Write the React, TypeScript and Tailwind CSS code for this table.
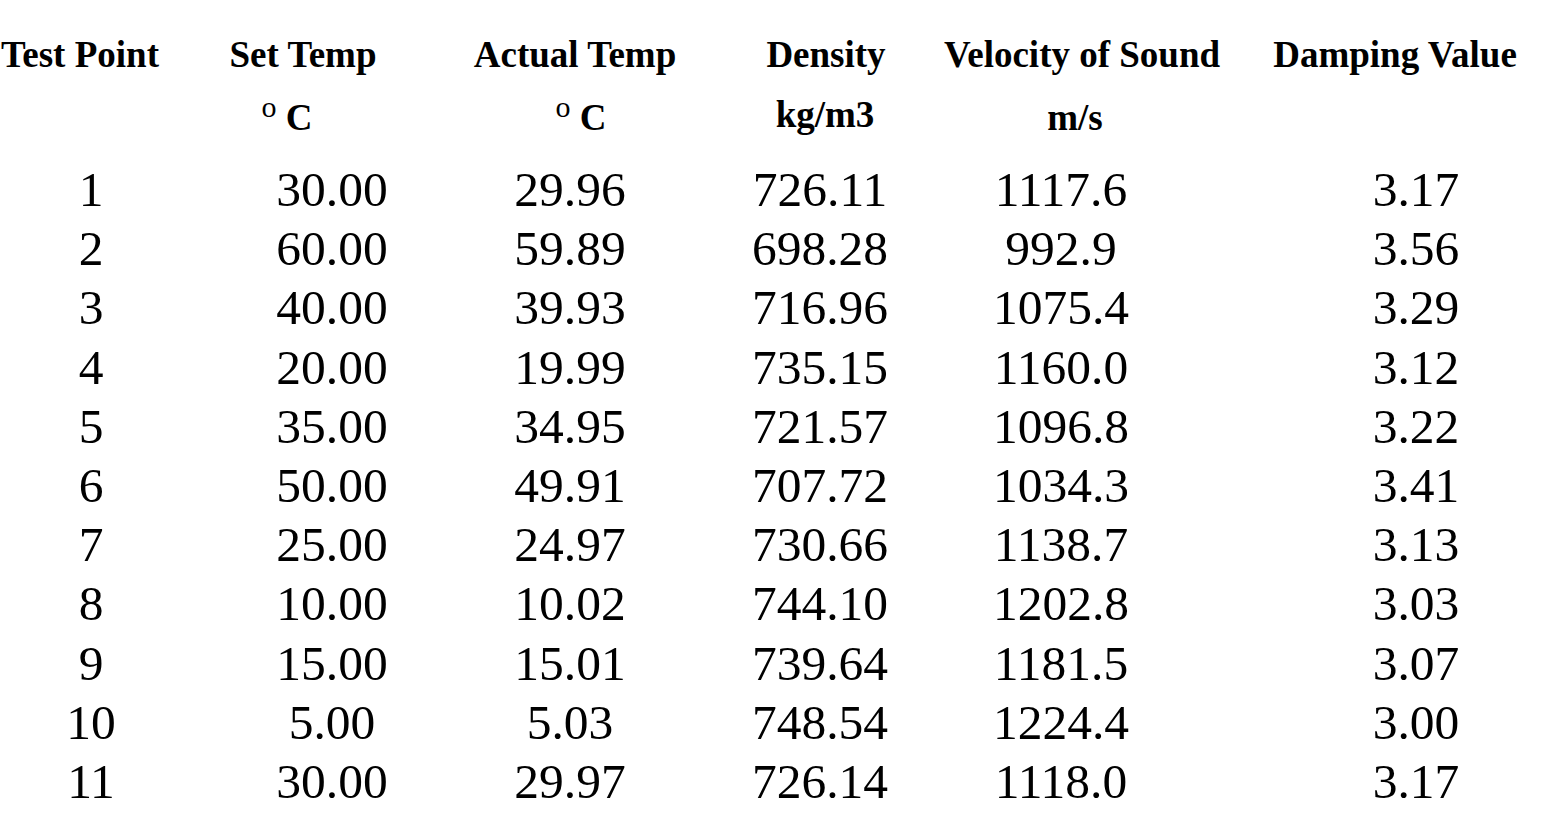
const rows = [
  ["1", "30.00", "29.96", "726.11", "1117.6", "3.17"],
  ["2", "60.00", "59.89", "698.28", "992.9", "3.56"],
  ["3", "40.00", "39.93", "716.96", "1075.4", "3.29"],
  ["4", "20.00", "19.99", "735.15", "1160.0", "3.12"],
  ["5", "35.00", "34.95", "721.57", "1096.8", "3.22"],
  ["6", "50.00", "49.91", "707.72", "1034.3", "3.41"],
  ["7", "25.00", "24.97", "730.66", "1138.7", "3.13"],
  ["8", "10.00", "10.02", "744.10", "1202.8", "3.03"],
  ["9", "15.00", "15.01", "739.64", "1181.5", "3.07"],
  ["10", "5.00", "5.03", "748.54", "1224.4", "3.00"],
  ["11", "30.00", "29.97", "726.14", "1118.0", "3.17"],
];

const cell = "shrink-0 flex justify-center whitespace-nowrap";

// degree mark drawn as a raised "o" like the source document
const Degree = () => (
  <span>
    <span className="relative -top-[13px] text-[30px] font-normal leading-none">o</span> C
  </span>
);

export default function App() {
  return (
    <div className="w-[1542px] h-[827px] overflow-hidden bg-white text-black font-['Liberation_Serif','Times_New_Roman',serif]">
      {/* header labels */}
      <div className="flex pt-[33px] text-[37px] font-bold leading-[44px]">
        <div className={`w-[160px] ${cell}`}>Test Point</div>
        <div className={`w-[286px] ${cell}`}>Set Temp</div>
        <div className={`w-[258px] ${cell}`}>Actual Temp</div>
        <div className={`w-[244px] ${cell}`}>Density</div>
        <div className={`w-[268px] ${cell}`}>Velocity of Sound</div>
        <div className={`ml-[34px] w-[290px] ${cell}`}>Damping Value</div>
      </div>

      {/* units */}
      <div className="flex h-[44px] mt-[19px] text-[37px] font-bold leading-[44px]">
        <div className={`w-[160px] ${cell}`}></div>
        <div className={`w-[254px] ${cell}`}>
          <Degree />
        </div>
        <div className={`w-[334px] ${cell}`}>
          <Degree />
        </div>
        <div className={`w-[154px] ${cell} -mt-[3px]`}>kg/m3</div>
        <div className={`w-[346px] ${cell}`}>m/s</div>
      </div>

      {/* data */}
      <div className="flex flex-col mt-[20px] text-[49.5px] leading-[59.2px]">
        {rows.map((r) => (
          <div key={r[0]} className="flex">
            <div className={`w-[182px] ${cell}`}>{r[0]}</div>
            <div className={`w-[300px] ${cell}`}>{r[1]}</div>
            <div className={`w-[176px] ${cell}`}>{r[2]}</div>
            <div className={`w-[324px] ${cell}`}>{r[3]}</div>
            <div className={`w-[158px] ${cell}`}>{r[4]}</div>
            <div className={`ml-[176px] w-[200px] ${cell}`}>{r[5]}</div>
          </div>
        ))}
      </div>
    </div>
  );
}
